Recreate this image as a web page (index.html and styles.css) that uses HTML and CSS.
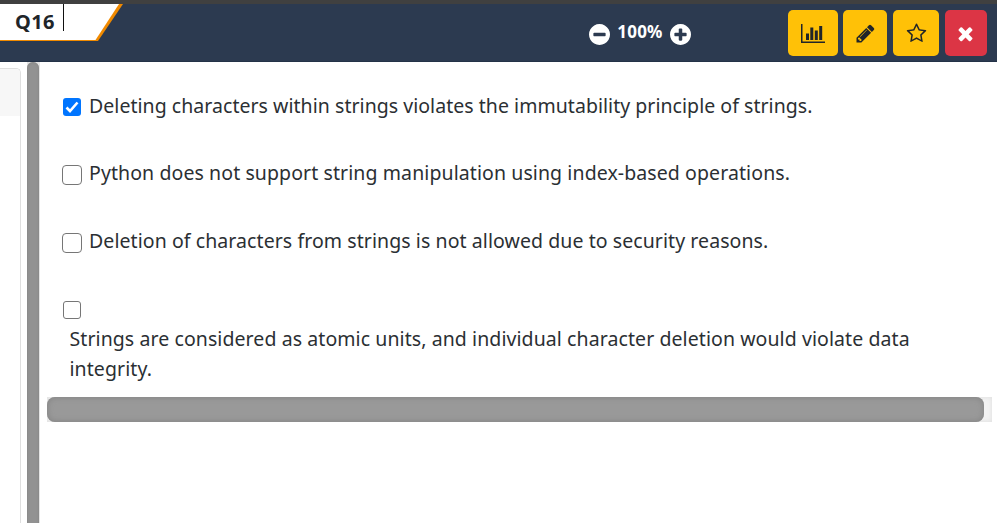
FILE: index.html
```html
<!DOCTYPE html>
<html lang="en">
<head>
<meta charset="utf-8">
<title>Q16</title>
<link rel="stylesheet" href="styles.css">
</head>
<body>
<header class="topbar">
  <div class="tab">
    <svg class="tab-shape" viewBox="0 0 124 37" aria-hidden="true"><path class="tab-edge" d="M0 0H123L98 37H0Z"/><path class="tab-face" d="M0 0H119L95.500 36H0Z"/></svg>
    <span class="tab-label">Q16</span>
  </div>
  <div class="zoom">
    <svg class="zoom-icon" viewBox="128 128 1536 1536"><path d="M1344 960v-128q0-26-19-45t-45-19h-768q-26 0-45 19t-19 45v128q0 26 19 45t45 19h768q26 0 45-19t19-45zm320-64q0 209-103 385.500t-279.500 279.500-385.500 103-385.500-103-279.500-279.500-103-385.500 103-385.500 279.500-279.500 385.500-103 385.500 103 279.500 279.500 103 385.500z"/></svg>
    <span class="zoom-value">100%</span>
    <svg class="zoom-icon" viewBox="128 128 1536 1536"><path d="M1344 960v-128q0-26-19-45t-45-19h-256v-256q0-26-19-45t-45-19h-128q-26 0-45 19t-19 45v256h-256q-26 0-45 19t-19 45v128q0 26 19 45t45 19h256v256q0 26 19 45t45 19h128q26 0 45-19t19-45v-256h256q26 0 45-19t19-45zm320-64q0 209-103 385.500t-279.500 279.500-385.500 103-385.500-103-279.500-279.500-103-385.500 103-385.500 279.500-279.500 385.500-103 385.500 103 279.500 279.500 103 385.500z"/></svg>
  </div>
  <div class="actions">
    <button class="btn btn-chart" aria-label="Statistics"><svg class="icon-chart" viewBox="0 0 24 19"><path d="M0 0H1.500V17.500H24V19H0ZM5 9.500H8V16H5ZM9.300 3.500H12.300V16H9.300ZM13.800 6.500H16.800V16H13.800ZM18.200 2H21.200V16H18.200Z"/></svg></button>
    <button class="btn btn-edit" aria-label="Edit"><svg class="icon" viewBox="0 0 1792 1792"><path d="M491 1536l91-91-235-235-91 91v107h128v128h107zm523-928q0-22-22-22-10 0-17 7l-542 542q-7 7-7 17 0 22 22 22 10 0 17-7l542-542q7-7 7-17zm-54-192l416 416-832 832h-416v-416zm683 96q0 53-37 90l-166 166-416-416 166-165q36-38 90-38 53 0 91 38l235 234q37 39 37 91z"/></svg></button>
    <button class="btn btn-star" aria-label="Bookmark"><svg class="icon" viewBox="0 0 1792 1792"><path d="M1201 1004l306-297-422-62-189-382-189 382-422 62 306 297-73 421 378-199 377 199zm527-357q0 22-26 48l-363 354 86 500q1 7 1 20 0 50-41 50-19 0-40-12l-449-236-449 236q-22 12-40 12-21 0-31.500-14.500t-10.500-35.500q0-6 2-20l86-500-364-354q-25-27-25-48 0-37 56-46l502-73 225-455q19-41 49-41t49 41l225 455 502 73q56 9 56 46z"/></svg></button>
    <button class="btn btn-close" aria-label="Close"><svg class="icon icon-close" viewBox="0 0 1792 1792"><path d="M1490 1322q0 40-28 68l-136 136q-28 28-68 28t-68-28l-294-294-294 294q-28 28-68 28t-68-28l-136-136q-28-28-28-68t28-68l294-294-294-294q-28-28-28-68t28-68l136-136q28-28 68-28t68 28l294 294 294-294q28-28 68-28t68 28l136 136q28 28 28 68t-28 68l-294 294 294 294q28 28 28 68z"/></svg></button>
  </div>
</header>
<main class="content">
  <aside class="side"><div class="card"><div class="card-head"></div></div></aside>
  <div class="vscroll"><div class="vthumb"></div></div>
  <section class="answers">
    <label class="option"><span class="box checked"><svg viewBox="0 0 18 18"><path d="M3.500 9.500L7 13L14.500 4.500"/></svg></span><span class="text t1">Deleting characters within strings violates the immutability principle of strings.</span></label>
    <label class="option"><span class="box large"></span><span class="text t2">Python does not support string manipulation using index-based operations.</span></label>
    <label class="option"><span class="box large"></span><span class="text t3">Deletion of characters from strings is not allowed due to security reasons.</span></label>
    <label class="option stacked"><span class="box"></span><span class="text t4">Strings are considered as atomic units, and individual character deletion would violate data<br>integrity.</span></label>
    <div class="hscroll"><div class="hthumb"></div></div>
  </section>
</main>
</body>
</html>
```
FILE: styles.css
```css
* { box-sizing: border-box; }
body {
  margin: 0;
  height: 523px;
  overflow: hidden;
  background: #fff;
  color: #212529;
  font-family: "Noto Sans", "Open Sans", sans-serif;
}
svg { display: block; fill: currentColor; }
.topbar {
  display: flex;
  height: 62px;
  border-top: 4px solid #404040;
  border-bottom: 1px solid #243247;
  background: #2c3a50;
}
.tab { position: relative; width: 124px; height: 37px; }
.tab-shape { position: absolute; left: 0; top: 0; width: 124px; height: 37px; }
.tab-edge { fill: #f18a00; }
.tab-face { fill: #fff; }
.tab-label {
  position: relative;
  display: block;
  width: 64px;
  height: 27px;
  padding-left: 15px;
  border-right: 1px solid #111;
  font-size: 20px;
  letter-spacing: 0.4px;
  font-weight: 700;
  line-height: 35px;
}
.zoom {
  display: flex;
  align-items: flex-start;
  width: 102px;
  margin-left: 465px;
  padding-top: 20px;
  color: #fff;
}
.zoom-icon { flex: none; width: 21px; height: 21px; }
.zoom-value {
  width: 60px;
  text-align: center;
  font-size: 17px;
  letter-spacing: 0.2px;
  font-weight: 700;
  line-height: 16px;
}
.actions { display: flex; margin-left: 97px; padding-top: 6px; }
.btn {
  display: flex;
  align-items: center;
  justify-content: center;
  height: 46px;
  padding: 0;
  border: 0;
  border-radius: 5px;
  background: #ffc107;
  color: #212529;
}
.btn-chart { width: 50px; }
.btn-edit { width: 44px; margin-left: 5px; }
.btn-star { width: 46px; margin-left: 6px; }
.btn-close { width: 42px; margin-left: 6px; background: #dc3545; color: #fff; }
.icon { width: 21px; height: 21px; }
.icon-chart { width: 24px; height: 19px; }
.icon-close { margin: 1px 1px 0 0; }
.content { display: flex; height: 461px; }
.side { width: 27px; padding-top: 6px; }
.card {
  width: 21px;
  height: 455px;
  border: 1px solid #dfdfdf;
  border-width: 1px 1px 0 0;
  border-radius: 0 5px 0 0;
}
.card-head { height: 47px; border-radius: 0 4px 0 0; background: #f7f7f7; }
.vscroll { width: 13px; background: #e4e4e4; }
.vthumb {
  width: 12px;
  height: 470px;
  border-radius: 6px;
  background: #929292;
  box-shadow: inset 0 0 3px #808080;
}
.answers { width: 957px; padding: 29px 5px 0 7px; }
.option { display: flex; align-items: flex-start; height: 67px; padding-left: 15px; }
.option:nth-child(2) { height: 68px; }
.box {
  flex: none;
  width: 18px;
  height: 18px;
  margin: 7px 8px 0 1px;
  border: 1px solid #767676;
  border-radius: 3px;
  background: #fff;
}
.box.large { width: 20px; height: 20px; margin: 7px 7px 0 0; border-radius: 4px; }
.checked { border: 0; background: #0075ff; }
.checked path { fill: none; stroke: #fff; stroke-width: 2.600; }
.text {
  color: #2b2f33;
  font-size: 19.500px;
  line-height: 30px;
  white-space: nowrap;
}
.t1 { letter-spacing: 0.042px; }
.t2 { letter-spacing: 0.095px; }
.t3 { letter-spacing: 0.078px; }
.t4 { letter-spacing: 0.083px; }
.stacked { flex-direction: column; height: 104px; }
.stacked .box { margin-top: 8px; }
.stacked .text { padding: 5px 0 0 7.500px; }
.hscroll {
  width: 945px;
  height: 25px;
  background: #f2f2f2;
  box-shadow: inset 0 0 5px #ddd;
}
.hthumb {
  width: 937px;
  height: 25px;
  border-radius: 8px;
  background: #999;
  box-shadow: inset 0 0 6px #808080;
}
```
